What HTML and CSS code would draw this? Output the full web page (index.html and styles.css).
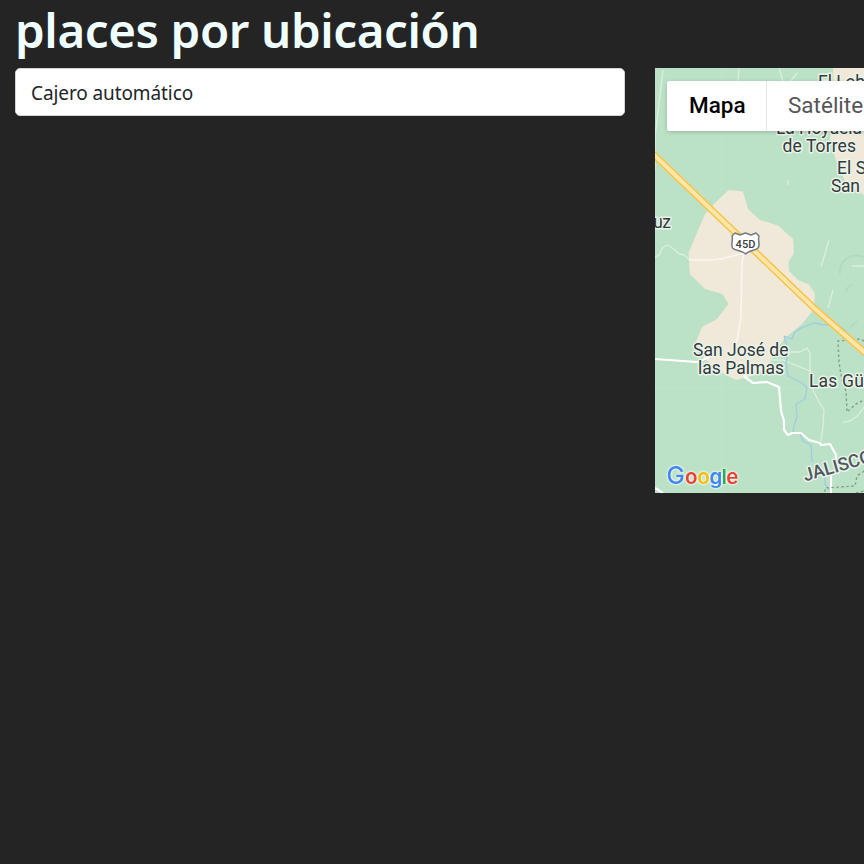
FILE: index.html
```html
<!DOCTYPE html>
<html lang="es">
<head>
<meta charset="utf-8">
<title>places por ubicación</title>
<link rel="stylesheet" href="styles.css">
</head>
<body>
<main class="page">
  <h1 class="title">places por ubicación</h1>
  <div class="row">
    <div class="search">Cajero automático</div>
    <section class="map">
      <svg class="canvas" viewBox="655 68 209 425" width="209" height="425">
        <rect class="land" x="655" y="68" width="209" height="425"/>
        <path class="town" d="M833 68H864V195L853 188 844 179 835 157 830 138 834 100Z"/>
        <path class="town" d="M728.5 190L743 191.500 748 209 760 220 778 225.500 793 239 794 253 788.500 262 789 271 798 280 809 284.500 815 294 814 309 802 324 785 338 775 352 768 366 756 375 736 380 718 371 704 358 696 342 702 327 717 319 728.500 304 722.500 294 705 289 690 274 688.500 253 705 214 714 204Z"/>
        <path class="grid" d="M721.500 68V190M721.500 372V493M655 387.500H864"/>
        <g class="minor">
          <path d="M663 70L659 103 655 137V170M739 68L738 81M779 68L783 81M790 82L797 73M829 240L821 267M833 290L828 308M852 266H864M788 180V185M843 422Q855 422 864 407"/>
          <path d="M655 257L659 255 663 247 668 245 675 250 679 254 684 255 690 260"/>
          <path d="M780 357L791 352 800 352 807 348 810 353V367L812 388 819 402 824 410 823 427 821 441M740 360H783L810 371"/>
        </g>
        <path class="lane" d="M689 260L710 260 721 259 744 253 742 263 741 315 739 330 736 346"/>
        <path class="relief" d="M864 257C851 252 839 260 840 274M852 285L847 288V292M857 321L849 329"/>
        <path class="river" d="M847 332L837 324 824 325 814 323 801 328 794 333 792 339 784 336M784 336L788 350 786 364 788 376 802 383 807 388 805 399 796 404 797 416 794 426 793 432M800 434L803 441 811 445 812 462M825 472V484L832 493"/>
        <path class="road" d="M655 359L697 362 710 357M740 364L745 377 753 383 767 382 779 387 781 411 784 421V430L788 435 792 433 801 433 809 440 820 443 821 445 830 444 836 455V474M831 475V493M655 488L663 493"/>
        <path class="admin" d="M864 341L860 339 838 341 839 362 842 381 846 391 847 412 856 404 864 400M864 471L857 476 855 486 825 488V493M856 493L864 491"/>
        <path class="highway-edge" d="M650 151L814 308 870 357"/>
        <path class="highway" d="M650 151L814 308 870 357"/>
        <path class="highway-center" d="M650 151L814 308 870 357"/>
        <path class="shield" d="M735 233L740 235 745.500 233 751 235 756 233 759 236C757 240 761 244 758 248C755 251 749 250 745.500 254C742 250 735 251 732.500 248C730 244 734 240 732 236Z"/>
        <text class="shield-label" x="735.500" y="247.500" textLength="20">45D</text>
        <g class="labels">
          <text x="818" y="88" textLength="57">El Lobo</text>
          <text x="776" y="134" textLength="86">La Hoyuela</text>
          <text x="782.500" y="151.500" textLength="73.500">de Torres</text>
          <text x="837" y="174" textLength="59">El Salto</text>
          <text x="831" y="191.500" textLength="29">San</text>
          <text x="637" y="227.500" textLength="34">Cruz</text>
          <text x="693" y="356" textLength="95.500">San José de</text>
          <text x="698" y="373.500" textLength="86">las Palmas</text>
          <text x="809" y="386.500" textLength="89">Las Güeras</text>
          <text class="state" x="805" y="481.500" textLength="71" transform="rotate(-16 805 481.5)">JALISCO</text>
        </g>
        <text class="brand" y="483.500"><tspan class="blue initial" x="666.500">G</tspan><tspan class="red" x="685">o</tspan><tspan class="yellow" x="697.300">o</tspan><tspan class="blue" x="709.500">g</tspan><tspan class="green" x="721.500">l</tspan><tspan class="red" x="726.300">e</tspan></text>
      </svg>
      <div class="types">
        <div class="type active">Mapa</div>
        <div class="type">Satélite</div>
      </div>
    </section>
  </div>
</main>
</body>
</html>
```
FILE: styles.css
```css
* { box-sizing: border-box; }
body { margin: 0; background: #242424; overflow: hidden; }
.page { height: 864px; padding-left: 15px; }
.title {
  height: 60px;
  margin: 0 0 8px;
  color: azure;
  font: 600 47.5px/60px "Noto Sans", "Open Sans", sans-serif;
  letter-spacing: -0.4px;
  white-space: nowrap;
}
.row { display: flex; align-items: flex-start; gap: 30px; }
.search {
  flex: none;
  width: 610px;
  height: 48px;
  padding: 0 15px;
  border: 1px solid #ced4da;
  border-radius: 5px;
  background: #fff;
  color: #212529;
  font: 400 19px/48px "Noto Sans", "Open Sans", sans-serif;
  letter-spacing: -0.1px;
}
.map { flex: none; position: relative; width: 209px; height: 425px; overflow: hidden; }
.canvas { display: block; }
.canvas path { fill: none; stroke-linejoin: round; }
.land { fill: #bbe2c6; }
.canvas .town { fill: #f0e9d9; }
.grid { stroke: #c0e4ca; stroke-width: 1; }
.minor { stroke: #dcefdf; stroke-width: 1.3; }
.lane { stroke: #faf7f0; stroke-width: 1.5; }
.relief { stroke: #b1dbbf; stroke-width: 2; }
.river { stroke: #a1cbe0; stroke-width: 1.3; }
.road { stroke: #fff; stroke-width: 2.2; }
.admin { stroke: #849c8b; stroke-width: 1.4; stroke-dasharray: 2.5 2.5; }
.highway-edge { stroke: #f8c552; stroke-width: 7; }
.highway { stroke: #fdebb4; stroke-width: 3.6; }
.highway-center { stroke: #fbdc85; stroke-width: .8; }
.canvas .shield { fill: #fff; stroke: #777b80; stroke-width: 1.5; }
.shield-label { font: 500 11px Roboto, sans-serif; fill: #3c4043; }
.labels {
  font: 400 17.500px Roboto, sans-serif;
  fill: #36393c;
  stroke: #e9f4e9;
  stroke-width: 3px;
  stroke-linejoin: round;
  paint-order: stroke;
}
.labels .state { fill: #505760; font-weight: 500; font-size: 18px; }
.brand {
  font: 600 20.5px Inter, sans-serif;
  filter: drop-shadow(0 0 1px #fff) drop-shadow(0 0 1px #e1f2e5);
}
.initial { font-size: 24.5px; font-weight: 500; }
.blue { fill: #4285f4; }
.red { fill: #ea4335; }
.yellow { fill: #fbbc05; }
.green { fill: #34a853; }
.types {
  position: absolute;
  left: 12px;
  top: 13px;
  display: flex;
  height: 50px;
  border-radius: 2.500px;
  background: #fff;
  box-shadow: 0 1px 5px -1px rgba(0, 0, 0, .3);
}
.type { width: 140px; padding-left: 21px; color: #565656; font: 400 22.500px/49px Roboto, sans-serif; }
.type.active { width: 100px; padding-left: 22px; border-right: 1px solid #e6e6e6; color: #000; font-weight: 500; }
```
